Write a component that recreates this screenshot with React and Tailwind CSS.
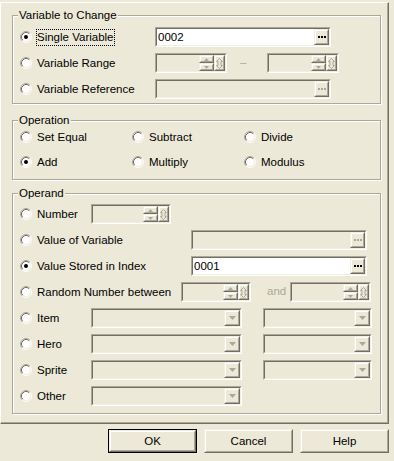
import React from "react";

const Radio = ({ checked }) => (
  <svg width="12" height="12" viewBox="0 0 12 12" className="shrink-0">
    <circle cx="6" cy="6" r="4.5" fill="white" />
    <path d="M2.11 9.89A5.5 5.5 0 0 1 9.89 2.11" fill="none" stroke="#ACA899" />
    <path d="M9.89 2.11A5.5 5.5 0 0 1 2.11 9.89" fill="none" stroke="#FFFFFF" />
    <path d="M2.82 9.18A4.5 4.5 0 0 1 9.18 2.82" fill="none" stroke="#716F64" />
    <path d="M9.18 2.82A4.5 4.5 0 0 1 2.82 9.18" fill="none" stroke="#F1EFE2" />
    {checked && <circle cx="6" cy="6" r="2" fill="black" />}
  </svg>
);

const Raised = ({ className = "", children }) => (
  <div className={`shrink-0 border border-t-[#f1efe2] border-l-[#f1efe2] border-r-[#716f64] border-b-[#716f64] ${className}`}>
    <div className="w-full h-full border border-t-white border-l-white border-r-[#aca899] border-b-[#aca899] bg-[#ece9d8] flex items-center justify-center overflow-visible">
      {children}
    </div>
  </div>
);

const Sunken = ({ className = "", white = false, children }) => (
  <div className={`h-[20px] shrink-0 border border-t-[#aca899] border-l-[#aca899] border-r-white border-b-white ${className}`}>
    <div className={`w-full h-full flex border border-t-[#716f64] border-l-[#716f64] border-r-[#f1efe2] border-b-[#f1efe2] ${white ? "bg-white" : "bg-[#ece9d8]"}`}>
      {children}
    </div>
  </div>
);

const Dots = ({ enabled }) => (
  <div className="flex gap-[1px]">
    <div className={`w-[2px] h-[2px] ${enabled ? "bg-black" : "bg-[#aca899]"}`} />
    <div className={`w-[2px] h-[2px] ${enabled ? "bg-black" : "bg-[#aca899]"}`} />
    <div className={`w-[2px] h-[2px] ${enabled ? "bg-black" : "bg-[#aca899]"}`} />
  </div>
);

const BrowseField = ({ w, value }) => (
  <Sunken className={w} white={!!value}>
    <div className="flex-1 pl-[1px] leading-[16px] text-black">{value}</div>
    <Raised className="w-[15px] h-full">
      <Dots enabled={!!value} />
    </Raised>
  </Sunken>
);

const Spin = ({ w }) => (
  <Sunken className={w}>
    <div className="flex-1" />
    <div className="flex flex-col w-[15px] h-full shrink-0">
      <Raised className="h-[8px] w-full">
        <svg width="5" height="3" viewBox="0 0 5 3" className="shrink-0">
          <path d="M2.5 0L5 3H0z" fill="#aca899" />
        </svg>
      </Raised>
      <Raised className="h-[8px] w-full">
        <svg width="5" height="3" viewBox="0 0 5 3" className="shrink-0">
          <path d="M0 0h5L2.5 3z" fill="#aca899" />
        </svg>
      </Raised>
    </div>
    <Raised className="w-[11px] h-full">
      <svg width="7" height="11" viewBox="0 0 7 11" className="shrink-0">
        <path d="M3.5 0.5L6.5 3.5H5V7.5H6.5L3.5 10.5L0.5 7.5H2V3.5H0.5Z" fill="none" stroke="#aca899" />
      </svg>
    </Raised>
  </Sunken>
);

const Combo = ({ w }) => (
  <Sunken className={w}>
    <div className="flex-1" />
    <Raised className="w-[16px] h-full">
      <svg width="7" height="4" viewBox="0 0 7 4" className="shrink-0">
        <path d="M0 0h7L3.5 4z" fill="#aca899" />
      </svg>
    </Raised>
  </Sunken>
);

const Opt = ({ label, checked, focus, w = "" }) => (
  <div className={`flex items-center shrink-0 h-[20px] ${w}`}>
    <Radio checked={checked} />
    <span
      className={`ml-[5px] whitespace-nowrap leading-[15px] ${focus ? "outline-1 outline-dotted outline-black" : ""}`}
    >
      {label}
    </span>
  </div>
);

const Group = ({ label, className = "", children }) => (
  <div className={`relative border border-[#aca899] shadow-[inset_1px_1px_0_#fff,1px_1px_0_#fff] ${className}`}>
    <span className="absolute left-[5px] -top-[8px] bg-[#ece9d8] px-[1px] leading-[14px] whitespace-nowrap">
      {label}
    </span>
    {children}
  </div>
);

const Btn = ({ label, def }) =>
  def ? (
    <div className="w-[89px] h-[24px] border border-black">
      <Raised className="w-full h-full">
        <span className="leading-[14px]">{label}</span>
      </Raised>
    </div>
  ) : (
    <Raised className="w-[89px] h-[24px]">
      <span className="leading-[14px]">{label}</span>
    </Raised>
  );

export default function App() {
  return (
    <div className="w-[394px] h-[461px] bg-[#ece9d8] text-black text-[11.5px] font-['Liberation_Sans',Arial,sans-serif] overflow-hidden">
      <div className="mt-[2px] w-[389px] h-[422px] border border-t-white border-l-white border-r-[#716f64] border-b-[#716f64] shadow-[inset_-1px_-1px_0_#aca899] flex flex-col">
        {/* Variable to Change */}
        <Group label="Variable to Change" className="ml-[11px] mt-[12px] w-[369px] h-[89px] shrink-0">
          <div className="pt-[11px] pl-[7px] flex flex-col gap-[6px]">
            <div className="flex items-center">
              <Opt label="Single Variable" checked focus w="w-[135px]" />
              <BrowseField w="w-[176px]" value="0002" />
            </div>
            <div className="flex items-center">
              <Opt label="Variable Range" w="w-[135px]" />
              <Spin w="w-[72px]" />
              <div className="w-[40px] pl-[13px] text-[#aca899]">–</div>
              <Spin w="w-[72px]" />
            </div>
            <div className="flex items-center">
              <Opt label="Variable Reference" w="w-[135px]" />
              <BrowseField w="w-[176px]" />
            </div>
          </div>
        </Group>

        {/* Operation */}
        <Group label="Operation" className="ml-[11px] mt-[16px] w-[369px] h-[60px] shrink-0">
          <div className="pt-[6px] pl-[7px] grid grid-cols-[112px_112px_112px] gap-y-[5px]">
            <Opt label="Set Equal" />
            <Opt label="Subtract" />
            <Opt label="Divide" />
            <Opt label="Add" checked />
            <Opt label="Multiply" />
            <Opt label="Modulus" />
          </div>
        </Group>

        {/* Operand */}
        <Group label="Operand" className="ml-[11px] mt-[13px] w-[369px] h-[221px] shrink-0">
          <div className="pt-[10px] pl-[7px] flex flex-col gap-[6px]">
            <div className="flex items-center">
              <Opt label="Number" w="w-[71px]" />
              <Spin w="w-[80px]" />
            </div>
            <div className="flex items-center">
              <Opt label="Value of Variable" w="w-[171px]" />
              <BrowseField w="w-[176px]" />
            </div>
            <div className="flex items-center">
              <Opt label="Value Stored in Index" checked w="w-[171px]" />
              <BrowseField w="w-[176px]" value="0001" />
            </div>
            <div className="flex items-center">
              <Opt label="Random Number between" w="w-[161px]" />
              <Spin w="w-[70px]" />
              <div className="w-[39px] pl-[16px] text-[#aca899]">and</div>
              <Spin w="w-[81px]" />
            </div>
            <div className="flex items-center">
              <Opt label="Item" w="w-[71px]" />
              <Combo w="w-[151px]" />
              <div className="w-[21px] shrink-0" />
              <Combo w="w-[109px]" />
            </div>
            <div className="flex items-center">
              <Opt label="Hero" w="w-[71px]" />
              <Combo w="w-[151px]" />
              <div className="w-[21px] shrink-0" />
              <Combo w="w-[109px]" />
            </div>
            <div className="flex items-center">
              <Opt label="Sprite" w="w-[71px]" />
              <Combo w="w-[151px]" />
              <div className="w-[21px] shrink-0" />
              <Combo w="w-[109px]" />
            </div>
            <div className="flex items-center">
              <Opt label="Other" w="w-[71px]" />
              <Combo w="w-[151px]" />
            </div>
          </div>
        </Group>
      </div>

      <div className="mt-[5px] pr-[5px] flex justify-end gap-[7px]">
        <Btn label="OK" def />
        <Btn label="Cancel" />
        <Btn label="Help" />
      </div>
    </div>
  );
}
